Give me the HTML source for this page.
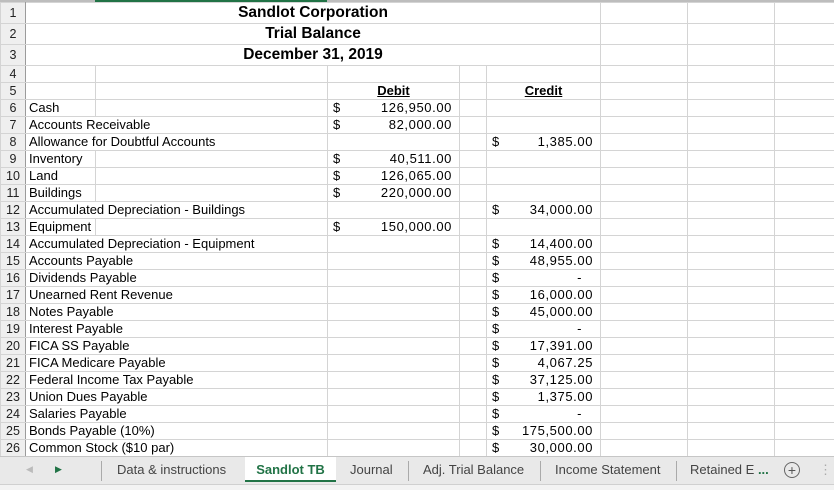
<!DOCTYPE html>
<html><head><meta charset="utf-8"><style>
body{margin:0;width:834px;height:489px;overflow:hidden;background:#fff;font-family:"Liberation Sans",Arial,sans-serif;position:relative}
table{border-collapse:collapse;table-layout:fixed;position:absolute;left:0;top:2px;width:835px;font-size:13px;color:#000}
td{border:1px solid #d4d4d4;padding:0 3px;height:16px;line-height:16px;white-space:nowrap;overflow:hidden}
td.h{background:#efefef;color:#222;text-align:center;padding:0;border-right:1px solid #9b9b9b;font-size:12.5px}
td.t{font-weight:bold;font-size:15.5px;text-align:center;height:20px;line-height:20px}
.m{position:relative}
.m span.d{position:absolute;left:5px;top:0}
.m span.n{position:absolute;right:7px;top:0;letter-spacing:0.6px}
.u{text-decoration:underline;font-weight:bold;text-align:center}
#top{position:absolute;left:0;top:0;width:834px;height:2px;background:#bdbdbd}
#top b{position:absolute;left:95px;width:232px;height:2px;background:#217346}
#bar{position:absolute;left:0;top:456px;width:834px;height:28px;background:#e9e9e9;border-top:1px solid #c6c6c6;font-size:13px;color:#444}
#bot{position:absolute;left:0;top:484px;width:834px;height:5px;background:#f3f3f3;border-top:1px solid #d0d0d0}
.tab{position:absolute;top:0;height:27px;line-height:25px}
.sep{position:absolute;top:4px;width:1px;height:20px;background:#aaa}
</style></head><body>
<div id="top"><b></b></div>
<table>
<colgroup><col style="width:25px"><col style="width:70px"><col style="width:232px"><col style="width:132px"><col style="width:27px"><col style="width:114px"><col style="width:87px"><col style="width:87px"><col style="width:61px"></colgroup>
<tr><td class="h" style="height:19px">1</td><td class="t" colspan="5" style="height:19px">Sandlot Corporation</td><td></td><td></td><td></td></tr>
<tr><td class="h">2</td><td class="t" colspan="5">Trial Balance</td><td></td><td></td><td></td></tr>
<tr><td class="h">3</td><td class="t" colspan="5">December 31, 2019</td><td></td><td></td><td></td></tr>
<tr><td class="h">4</td><td></td><td></td><td></td><td></td><td></td><td></td><td></td><td></td></tr>
<tr><td class="h">5</td><td></td><td></td><td class="u">Debit</td><td></td><td class="u">Credit</td><td></td><td></td><td></td></tr>
<tr><td class="h">6</td><td>Cash</td><td></td><td class="m"><span class="d">$</span><span class="n">126,950.00</span></td><td></td><td></td><td></td><td></td><td></td></tr>
<tr><td class="h">7</td><td colspan="2">Accounts Receivable</td><td class="m"><span class="d">$</span><span class="n">82,000.00</span></td><td></td><td></td><td></td><td></td><td></td></tr>
<tr><td class="h">8</td><td colspan="2">Allowance for Doubtful Accounts</td><td></td><td></td><td class="m"><span class="d">$</span><span class="n">1,385.00</span></td><td></td><td></td><td></td></tr>
<tr><td class="h">9</td><td>Inventory</td><td></td><td class="m"><span class="d">$</span><span class="n">40,511.00</span></td><td></td><td></td><td></td><td></td><td></td></tr>
<tr><td class="h">10</td><td>Land</td><td></td><td class="m"><span class="d">$</span><span class="n">126,065.00</span></td><td></td><td></td><td></td><td></td><td></td></tr>
<tr><td class="h">11</td><td>Buildings</td><td></td><td class="m"><span class="d">$</span><span class="n">220,000.00</span></td><td></td><td></td><td></td><td></td><td></td></tr>
<tr><td class="h">12</td><td colspan="2">Accumulated Depreciation - Buildings</td><td></td><td></td><td class="m"><span class="d">$</span><span class="n">34,000.00</span></td><td></td><td></td><td></td></tr>
<tr><td class="h">13</td><td>Equipment</td><td></td><td class="m"><span class="d">$</span><span class="n">150,000.00</span></td><td></td><td></td><td></td><td></td><td></td></tr>
<tr><td class="h">14</td><td colspan="2">Accumulated Depreciation - Equipment</td><td></td><td></td><td class="m"><span class="d">$</span><span class="n">14,400.00</span></td><td></td><td></td><td></td></tr>
<tr><td class="h">15</td><td colspan="2">Accounts Payable</td><td></td><td></td><td class="m"><span class="d">$</span><span class="n">48,955.00</span></td><td></td><td></td><td></td></tr>
<tr><td class="h">16</td><td colspan="2">Dividends Payable</td><td></td><td></td><td class="m"><span class="d">$</span><span class="n" style="right:18px">-</span></td><td></td><td></td><td></td></tr>
<tr><td class="h">17</td><td colspan="2">Unearned Rent Revenue</td><td></td><td></td><td class="m"><span class="d">$</span><span class="n">16,000.00</span></td><td></td><td></td><td></td></tr>
<tr><td class="h">18</td><td colspan="2">Notes Payable</td><td></td><td></td><td class="m"><span class="d">$</span><span class="n">45,000.00</span></td><td></td><td></td><td></td></tr>
<tr><td class="h">19</td><td colspan="2">Interest Payable</td><td></td><td></td><td class="m"><span class="d">$</span><span class="n" style="right:18px">-</span></td><td></td><td></td><td></td></tr>
<tr><td class="h">20</td><td colspan="2">FICA SS Payable</td><td></td><td></td><td class="m"><span class="d">$</span><span class="n">17,391.00</span></td><td></td><td></td><td></td></tr>
<tr><td class="h">21</td><td colspan="2">FICA Medicare Payable</td><td></td><td></td><td class="m"><span class="d">$</span><span class="n">4,067.25</span></td><td></td><td></td><td></td></tr>
<tr><td class="h">22</td><td colspan="2">Federal Income Tax Payable</td><td></td><td></td><td class="m"><span class="d">$</span><span class="n">37,125.00</span></td><td></td><td></td><td></td></tr>
<tr><td class="h">23</td><td colspan="2">Union Dues Payable</td><td></td><td></td><td class="m"><span class="d">$</span><span class="n">1,375.00</span></td><td></td><td></td><td></td></tr>
<tr><td class="h">24</td><td colspan="2">Salaries Payable</td><td></td><td></td><td class="m"><span class="d">$</span><span class="n" style="right:18px">-</span></td><td></td><td></td><td></td></tr>
<tr><td class="h">25</td><td colspan="2">Bonds Payable (10%)</td><td></td><td></td><td class="m"><span class="d">$</span><span class="n">175,500.00</span></td><td></td><td></td><td></td></tr>
<tr><td class="h">26</td><td colspan="2">Common Stock ($10 par)</td><td></td><td></td><td class="m"><span class="d">$</span><span class="n">30,000.00</span></td><td></td><td></td><td></td></tr>
</table>
<div id="bar">
<div class="tab" style="left:26px;color:#bbb;font-size:9px">&#9664;</div>
<div class="tab" style="left:55px;color:#217346;font-size:9px">&#9654;</div>
<div class="sep" style="left:101px"></div>
<div class="tab" style="left:117px">Data &amp; instructions</div>
<div class="tab" style="left:245px;width:91px;background:#fff;border-bottom:2px solid #217346;height:23px;text-align:center;color:#217346;font-weight:bold">Sandlot TB</div>
<div class="tab" style="left:350px">Journal</div>
<div class="sep" style="left:408px"></div>
<div class="tab" style="left:423px">Adj. Trial Balance</div>
<div class="sep" style="left:540px"></div>
<div class="tab" style="left:555px">Income Statement</div>
<div class="sep" style="left:676px"></div>
<div class="tab" style="left:690px">Retained E <b style="color:#217346">...</b></div>
<div class="tab" style="left:784px;top:5px;width:14px;height:14px;border:1px solid #666;border-radius:50%;line-height:14px;text-align:center;font-size:14px;color:#555">+</div>
<div class="tab" style="left:819px;color:#aaa">&#8942;</div>
</div>
<div id="bot"></div>
</body></html>
